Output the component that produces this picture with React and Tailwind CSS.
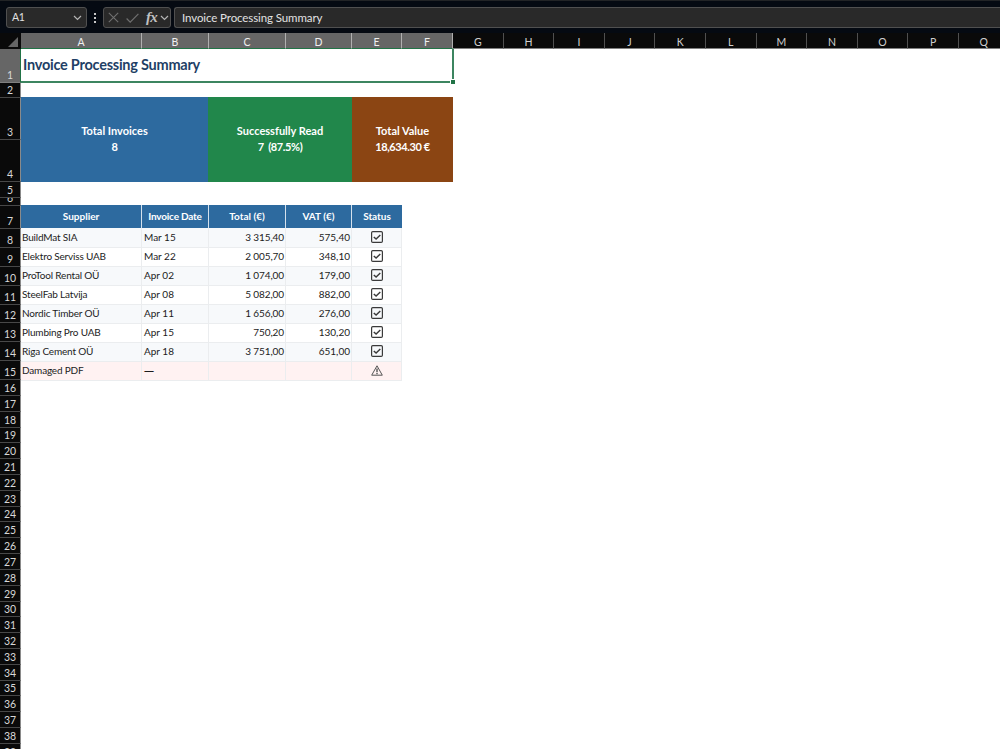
import React from "react";

const columns = [
  { name: "A", width: 121, selected: true },
  { name: "B", width: 67, selected: true },
  { name: "C", width: 77, selected: true },
  { name: "D", width: 66, selected: true },
  { name: "E", width: 50, selected: true },
  { name: "F", width: 51, selected: true },
  ..."GHIJKLMNOPQ".split("").map((name) => ({ name, width: 50.6, selected: false })),
];

// Heights of rows 1-7, the rest is computed
const topRows = [34, 15, 42, 42, 16, 8, 23];

const rowHeight = (n) => {
  if (n <= 7) return topRows[n - 1];
  if (n <= 15) return 18.9;
  return 15.82;
};

const rows = Array.from({ length: 39 }, (_, i) => i + 1);

const invoices = [
  { supplier: "BuildMat SIA", date: "Mar 15", total: "3 315,40", vat: "575,40", ok: true },
  { supplier: "Elektro Serviss UAB", date: "Mar 22", total: "2 005,70", vat: "348,10", ok: true },
  { supplier: "ProTool Rental OÜ", date: "Apr 02", total: "1 074,00", vat: "179,00", ok: true },
  { supplier: "SteelFab Latvija", date: "Apr 08", total: "5 082,00", vat: "882,00", ok: true },
  { supplier: "Nordic Timber OÜ", date: "Apr 11", total: "1 656,00", vat: "276,00", ok: true },
  { supplier: "Plumbing Pro UAB", date: "Apr 15", total: "750,20", vat: "130,20", ok: true },
  { supplier: "Riga Cement OÜ", date: "Apr 18", total: "3 751,00", vat: "651,00", ok: true },
  { supplier: "Damaged PDF", date: "—", total: "", vat: "", ok: false },
];

const Chevron = () => (
  <svg width="9" height="6" viewBox="0 0 9 6" fill="none" stroke="#b5b5b5" strokeWidth="1.2">
    <path d="M1 1l3.5 3.5L8 1" />
  </svg>
);

const CheckIcon = () => (
  <svg width="12" height="12" viewBox="0 0 12 12" fill="none" stroke="#3a3a3a">
    <rect x="0.6" y="0.6" width="10.8" height="10.8" rx="1.2" strokeWidth="1.2" />
    <path d="M2.8 5.9l2.3 2.2 4.2-4.2" strokeWidth="1.4" />
  </svg>
);

const WarningIcon = () => (
  <svg width="12" height="11" viewBox="0 0 12 11" fill="none" stroke="#555555">
    <path d="M6 0.8L11.3 10.2H0.7z" strokeWidth="1" strokeLinejoin="round" />
    <path d="M6 3.4v3.8M6 8v1.2" strokeWidth="1.4" />
  </svg>
);

const FormulaBar = () => (
  <div className="flex h-[33px] border-t border-[#222426] bg-[#050a12] pl-[6px] pt-[6px] text-[#e2e2e2]">
    <div className="flex h-[21px] w-[81px] items-center justify-between rounded-[3px] border border-[#505050] bg-[#292929] pl-[5px] pr-[4px] text-[10.5px] tracking-[-0.4px]">
      <span>A1</span>
      <Chevron />
    </div>
    <div className="flex h-[21px] w-[16px] flex-col items-center justify-center gap-[2px]">
      <span className="h-[2px] w-[2px] bg-[#c8c8c8]" />
      <span className="h-[2px] w-[2px] bg-[#c8c8c8]" />
      <span className="h-[2px] w-[2px] bg-[#c8c8c8]" />
    </div>
    <div className="flex h-[21px] w-[68px] items-center rounded-[3px] border border-[#505050] bg-[#292929] pl-[4px]">
      <svg width="11" height="11" viewBox="0 0 11 11" stroke="#707070" strokeWidth="1.1">
        <path d="M0.8 0.8l9.4 9.4M10.2 0.8L0.8 10.2" />
      </svg>
      <svg className="ml-[7px]" width="13" height="10" viewBox="0 0 13 10" fill="none" stroke="#707070" strokeWidth="1.2">
        <path d="M0.6 5.5l3.6 3.6L12.4 0.8" />
      </svg>
      <span className="ml-[7px] w-[14px] pb-px font-['Liberation_Serif',serif] text-[15px] font-bold italic leading-[18px] tracking-[-0.8px] text-[#c0c0c0]">
        fx
      </span>
      <Chevron />
    </div>
    <div className="ml-[3px] flex h-[21px] flex-1 items-center rounded-l-[3px] border border-r-0 border-[#505050] bg-[#292929] pl-[7px] text-[11.5px] tracking-[-0.1px]">
      Invoice Processing Summary
    </div>
  </div>
);

const ColumnHeaders = () => (
  <div className="flex h-[16px] bg-[#0a0a0a] text-[10.5px] leading-[18px]">
    <div className="flex w-[21px] shrink-0 items-end justify-end pb-[2px] pr-[3px]">
      <svg width="10" height="10" viewBox="0 0 10 10" fill="#666666">
        <path d="M10 0v10H0z" />
      </svg>
    </div>
    {columns.map((col) => (
      <div
        key={col.name}
        style={{ width: col.width }}
        className={
          col.selected
            ? "shrink-0 border-b border-r border-b-[#217346] border-r-[#b0b0b0] bg-[#666666] text-center text-[#f0f0f0]"
            : "shrink-0 border-b border-r border-b-[#808080] border-r-[#505050] text-center text-[#d0d0d0]"
        }
      >
        {col.name}
      </div>
    ))}
  </div>
);

const RowHeaders = () => (
  <div className="w-[21px] shrink-0 bg-[#0a0a0a] text-[10.5px] text-[#d8d8d8]">
    {rows.map((n) => (
      <div
        key={n}
        style={{ height: rowHeight(n) }}
        className={
          n === 1
            ? "flex items-end justify-center overflow-hidden border-b border-r border-b-[#808080] border-r-[#217346] bg-[#666666] leading-[14px]"
            : "flex items-end justify-center overflow-hidden border-b border-r border-b-[#484848] border-r-[#8a8a8a] leading-[13px]"
        }
      >
        {n}
      </div>
    ))}
  </div>
);

const SummaryCard = ({ label, value, className }) => (
  <div className={`flex flex-col items-center justify-center pb-[2px] text-[11px] font-bold leading-[16px] text-white ${className}`}>
    <span>{label}</span>
    <span className="whitespace-pre tracking-[-0.4px]">{value}</span>
  </div>
);

const InvoiceTable = () => (
  <div className="w-[381px]">
    <div className="grid h-[23px] grid-cols-[121px_67px_77px_66px_50px] bg-[#2d6a9f] text-center text-[10px] font-bold leading-[23px] text-white">
      <div className="border-r border-[#d5e1ec]">Supplier</div>
      <div className="whitespace-nowrap border-r border-[#d5e1ec] tracking-[-0.2px]">Invoice Date</div>
      <div className="border-r border-[#d5e1ec]">Total (€)</div>
      <div className="border-r border-[#d5e1ec]">VAT (€)</div>
      <div>Status</div>
    </div>
    {invoices.map((inv, index) => (
      <div
        key={inv.supplier}
        className={`grid h-[19px] grid-cols-[121px_67px_77px_66px_50px] text-[10px] leading-[19px] text-[#1c1c1c] ${
          !inv.ok ? "bg-[#fff2f2]" : index % 2 === 0 ? "bg-[#f7f9fb]" : "bg-white"
        }`}
      >
        <div className="whitespace-nowrap border-b border-r border-[#ebedef] pl-px tracking-[-0.18px]">{inv.supplier}</div>
        <div className={`border-b border-r border-[#ebedef] pl-[2px] ${inv.ok ? "" : "font-['Noto_Sans']"}`}>{inv.date}</div>
        <div className="border-b border-r border-[#ebedef] pr-px text-right tracking-[-0.1px]">{inv.total}</div>
        <div className="border-b border-r border-[#ebedef] pr-px text-right">{inv.vat}</div>
        <div className="flex items-center justify-center border-b border-r border-[#ebedef] pb-px">
          {inv.ok ? <CheckIcon /> : <WarningIcon />}
        </div>
      </div>
    ))}
  </div>
);

const App = () => {
  return (
    <div className="flex h-[749px] w-[1000px] flex-col overflow-hidden bg-white font-[Lato,'Noto_Sans',sans-serif]">
      <FormulaBar />
      <ColumnHeaders />
      <div className="flex min-h-0 flex-1 overflow-hidden">
        <RowHeaders />
        <div className="flex-1">
          {/* Selected merged cell A1:F1 */}
          <div className="relative flex h-[34px] w-[433px] items-center border-b-2 border-r-2 border-[#3c8560] pl-[2px] text-[14.5px] font-bold tracking-[-0.24px] text-[#1f3f66]">
            Invoice Processing Summary
            <span className="absolute -bottom-[3px] -right-[3px] h-[5px] w-[5px] border-l border-t border-white bg-[#217346]" />
          </div>
          <div className="mt-[14px] flex h-[85px] w-[432px]">
            <SummaryCard label="Total Invoices" value="8" className="w-[187px] bg-[#2d6a9f]" />
            <SummaryCard label="Successfully Read" value="7  (87.5%)" className="w-[144px] bg-[#21874b]" />
            <SummaryCard label="Total Value" value="18,634.30 €" className="w-[101px] bg-[#8b4513]" />
          </div>
          <div className="mt-[23px]">
            <InvoiceTable />
          </div>
        </div>
      </div>
    </div>
  );
};

export default App;
